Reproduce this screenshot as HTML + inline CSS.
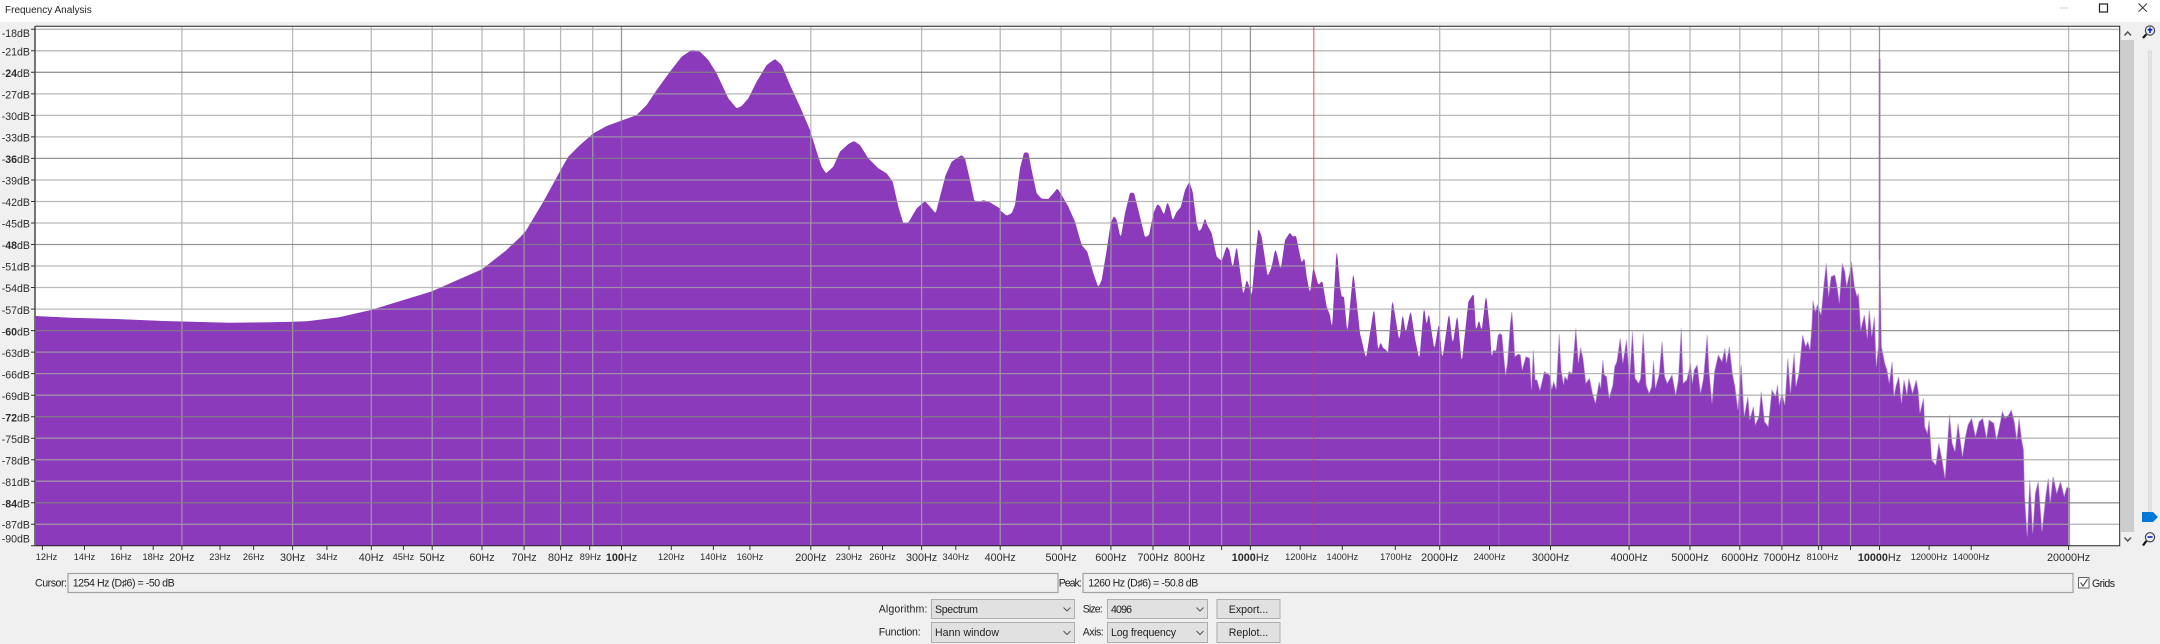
<!DOCTYPE html>
<html><head><meta charset="utf-8"><title>Frequency Analysis</title>
<style>
html,body{margin:0;padding:0;background:#f0f0f0;width:2160px;height:644px;overflow:hidden}
svg{display:block}
text{font-family:"Liberation Sans",Arial,sans-serif;fill:#2b2b2b}
.d{font-size:10.6px;text-anchor:end}
.M{font-size:10.8px;text-anchor:middle}
.m{font-size:9.2px;text-anchor:middle}
.c{font-size:10.6px;fill:#222}
</style></head><body>
<svg width="2160" height="644" viewBox="0 0 2160 644" xmlns="http://www.w3.org/2000/svg">
<defs>
<filter id="sm" filterUnits="userSpaceOnUse" x="0" y="0" width="2160" height="644" color-interpolation-filters="sRGB">
<feGaussianBlur stdDeviation=".8"/>
<feComponentTransfer><feFuncA type="linear" slope="4" intercept="-1.5"/></feComponentTransfer>
</filter>
<clipPath id="pc"><rect x="35" y="26" width="2085" height="520"/></clipPath>
</defs>
<rect width="2160" height="644" fill="#f0f0f0"/>
<rect width="2160" height="22" fill="#fff"/>
<text x="5" y="13" class="c" style="font-size:10px;fill:#222">Frequency Analysis</text>
<path d="M2060 8H2068" stroke="#ccc" stroke-width="1"/>
<rect x="2099.5" y="4" width="8" height="8" fill="none" stroke="#222" stroke-width="1.2"/>
<path d="M2138.5 3.5L2147 11.8M2147 3.5L2138.5 11.8" stroke="#333" stroke-width="1" fill="none"/>

<!-- plot -->
<rect x="35" y="26" width="2085" height="520" fill="#fff"/>

<!-- spectrum -->
<g clip-path="url(#pc)">
<g fill="#8a3abb" filter="url(#sm)">
<path d="M30 570V316L35.7 316 71 317.7 116 319 164 321 229 322.7 271 322.3 307 321.3 339 317.3 371 310 432 291.3 482 269.3 514 244.3 525 231.7V570Z"/>
<path transform="translate(500 30) scale(.33333)" d="M0 1620V680L30 650 73 610 100 565 130 515 182 420 205 380 240 345 280 310 320 288 364 272 410 255 440 225 470 180 510 125 545 80 575 60 600 65 625 90 650 130 685 205 710 235 725 228 745 205 770 155 800 105 825 87 845 105 870 165 900 230 930 300 950 365 965 410 978 430 1000 410 1020 365 1045 342 1062 333 1080 345 1105 385 1135 415 1160 430 1178 455 1195 530 1210 580 1225 578 1250 535 1275 513 1290 530 1307 550 1320 500 1337 435 1355 395 1385 375 1395 385 1410 450 1423 512 1440 515 1450 510 1470 517 1500 535V1620Z"/>
<path transform="translate(1000 130) scale(.33333)" d="M-3 1320V238L0 240 20 257 35 250 45 225 60 115 72 68 85 68 95 120 110 190 125 206 145 207 160 190 172 175 185 195 205 230 225 275 245 345 262 365 280 430 295 472 305 450 320 360 332 280 342 257 350 270 362 325 375 250 390 188 402 188 415 240 435 322 447 315 460 250 472 222 480 228 492 255 502 215 510 235 518 272 530 245 542 232 555 180 568 155 578 185 590 280 597 305 605 295 615 263 622 285 635 310 650 380 665 393 680 348 688 360 698 415 710 345 720 420 730 497 740 447 748 470 755 500 765 390 775 293 785 320 803 440 815 410 826 355 833 380 842 420 855 330 870 307 878 320 888 317 905 400 913 382 920 440 930 492 940 410 955 465 967 452 980 530 990 555 996 600 1010 348 1020 470 1025 500 1032 500 1042 612 1060 422 1080 610 1098 686 1122 532 1135 665 1141 635 1150 655 1160 660 1163 680 1177 505 1198 635 1208 548 1217 610 1232 540 1245 625 1258 690 1272 525 1280 590 1286 545 1303 660 1317 575 1327 690 1347 545 1358 645 1372 550 1385 702 1405 515 1421 490 1428 605 1437 568 1445 605 1458 490 1470 600 1475 690 1480 658 1488 665 1495 605 1500 625V1320Z"/>
</g>
<path fill="#8a3abb" stroke="#b08fd0" stroke-opacity=".5" stroke-width="1" vector-effect="non-scaling-stroke" transform="translate(1500 230) scale(.36996 .33333)" d="M-3 1000V315L0 310 5 315 15 435 20 400 28 280 32 245 36 300 40 380 50 372 55 375 60 420 70 380 80 385 85 480 90 360 95 450 100 450 108 482 120 425 135 437 140 478 145 455 152 478 160 312 165 420 172 465 175 440 182 450 186 425 195 430 205 295 212 400 218 352 225 390 232 460 242 445 250 490 258 520 268 455 272 475 278 390 282 435 288 440 295 505 305 465 310 410 316 395 325 325 332 400 342 330 350 450 358 305 365 445 375 460 380 445 387 310 395 465 403 490 410 470 415 390 420 475 430 435 438 335 445 440 452 460 465 435 475 495 482 450 490 295 495 460 505 450 515 400 520 460 525 420 533 405 542 490 550 445 560 315 565 425 573 520 580 425 590 375 600 395 608 355 612 400 620 350 628 430 635 470 643 540 652 405 660 560 670 500 675 570 685 530 690 585 700 560 706 485 715 575 725 590 735 480 745 500 750 465 755 525 762 490 770 525 778 385 785 490 795 370 800 470 808 430 818 315 826 350 832 335 838 360 843 285 846 212 852 245 858 225 868 255 875 170 882 100 888 200 895 140 905 135 912 175 917 220 925 100 932 125 937 170 945 130 950 95 958 170 965 200 969 190 975 300 985 255 993 325 998 240 1005 320 1012 260 1017 410 1023 350 1027 75 1031 350 1040 400 1046 420 1052 460 1060 395 1065 500 1070 470 1078 440 1085 520 1092 450 1100 495 1105 445 1115 490 1125 450 1130 480 1135 550 1145 505 1148 590 1155 610 1160 570 1167 690 1178 705 1186 640 1195 690 1203 745 1215 555 1222 640 1230 665 1238 580 1250 680 1258 620 1265 585 1275 565 1285 620 1295 575 1305 565 1315 625 1322 570 1335 580 1342 630 1350 590 1358 545 1365 565 1375 555 1382 540 1390 575 1397 630 1403 565 1410 630 1415 660 1418 800 1425 920 1432 750 1440 910 1447 790 1455 755 1465 905 1475 800 1482 745 1487 820 1495 740 1505 790 1515 755 1525 800 1532 772 1540 775V1000Z"/>
</g>
<path d="M1879.6 59V260" stroke="#a070c4" stroke-width="1.6"/>

<!-- grid -->
<path fill="none" stroke="#a7a7a7" stroke-opacity=".78" stroke-width="1.3" d="M35 29.3H2119M35 50.8H2119M35 93.9H2119M35 115.4H2119M35 136.9H2119M35 180H2119M35 201.5H2119M35 223H2119M35 266H2119M35 287.5H2119M35 309.1H2119M35 352.1H2119M35 373.6H2119M35 395.2H2119M35 438.2H2119M35 459.7H2119M35 481.2H2119M35 524.3H2119
M181.9 27V546M292.6 27V546M371.3 27V546M432.2 27V546M482 27V546M524.1 27V546M560.6 27V546M592.7 27V546M810.8 27V546M921.6 27V546M1000.2 27V546M1061.1 27V546M1110.9 27V546M1153 27V546M1189.5 27V546M1221.6 27V546M1439.7 27V546M1550.5 27V546M1629.1 27V546M1690 27V546M1739.8 27V546M1781.9 27V546M1818.6 27V546M1850.5 27V546M2068.6 27V546"/>
<path fill="none" stroke="#808080" stroke-opacity=".82" stroke-width="1.3" d="M35 72.3H2119M35 158.4H2119M35 244.5H2119M35 330.6H2119M35 416.7H2119M35 502.8H2119M621.5 27V546M1250.4 27V546M1879.5 27V546"/>
<path d="M1313.7 27V546" stroke="#e8303a" stroke-opacity=".6" stroke-width="1.4"/>

<!-- plot frame -->
<path fill="none" stroke="#222" stroke-width="1" d="M35 26.3H2119.7V545.7H35"/>
<path d="M35 26V546" stroke="#666" stroke-width="1.8"/>
<path fill="none" stroke="#333" stroke-width="1" d="M31 29.3H35M31 50.8H35M31 72.3H35M31 93.9H35M31 115.4H35M31 136.9H35M31 158.4H35M31 180H35M31 201.5H35M31 223H35M31 244.5H35M31 266H35M31 287.5H35M31 309.1H35M31 330.6H35M31 352.1H35M31 373.6H35M31 395.2H35M31 416.7H35M31 438.2H35M31 459.7H35M31 481.2H35M31 502.8H35M31 524.3H35M31 545.8H35
M42.4 546V550M84.5 546V550M121 546V550M153.2 546V550M181.9 546V550M220 546V550M253.6 546V550M292.6 546V550M326.9 546V550M371.3 546V550M403.4 546V550M432.2 546V550M482 546V550M524.1 546V550M560.6 546V550M589.7 546V550M621.5 546V550M671.3 546V550M713.4 546V550M749.9 546V550M810.8 546V550M849 546V550M882.5 546V550M921.6 546V550M955.8 546V550M1000.2 546V550M1061.1 546V550M1110.9 546V550M1153 546V550M1189.5 546V550M1221.6 546V550M1250.4 546V550M1300.2 546V550M1342.3 546V550M1395.3 546V550M1439.7 546V550M1489.5 546V550M1550.5 546V550M1629.1 546V550M1690 546V550M1739.8 546V550M1781.9 546V550M1818.6 546V550M1821.7 546V550M1850.5 546V550M1879.5 546V550M1929.1 546V550M1971.2 546V550M2068.6 546V550"/>

<!-- dB labels -->
<g>
<text class="d" x="30" y="37">-18dB</text>
<text class="d" x="30" y="55.5">-21dB</text>
<text class="d" x="30" y="77">-<tspan font-weight="bold">24</tspan>dB</text>
<text class="d" x="30" y="98.5">-27dB</text>
<text class="d" x="30" y="120">-30dB</text>
<text class="d" x="30" y="141.5">-33dB</text>
<text class="d" x="30" y="163">-<tspan font-weight="bold">36</tspan>dB</text>
<text class="d" x="30" y="184.7">-39dB</text>
<text class="d" x="30" y="206.2">-42dB</text>
<text class="d" x="30" y="227.7">-45dB</text>
<text class="d" x="30" y="249">-<tspan font-weight="bold">48</tspan>dB</text>
<text class="d" x="30" y="270.7">-51dB</text>
<text class="d" x="30" y="292.2">-54dB</text>
<text class="d" x="30" y="313.8">-57dB</text>
<text class="d" x="30" y="335.3">-<tspan font-weight="bold">60</tspan>dB</text>
<text class="d" x="30" y="356.8">-63dB</text>
<text class="d" x="30" y="378.3">-66dB</text>
<text class="d" x="30" y="399.9">-69dB</text>
<text class="d" x="30" y="421.4">-<tspan font-weight="bold">72</tspan>dB</text>
<text class="d" x="30" y="442.9">-75dB</text>
<text class="d" x="30" y="464.4">-78dB</text>
<text class="d" x="30" y="485.9">-81dB</text>
<text class="d" x="30" y="507.5">-<tspan font-weight="bold">84</tspan>dB</text>
<text class="d" x="30" y="528.5">-87dB</text>
<text class="d" x="30" y="542.5">-90dB</text>
</g>

<!-- Hz labels -->
<g>
<text class="m" x="46.5" y="560">12Hz</text><text class="m" x="84.5" y="560">14Hz</text><text class="m" x="121" y="560">16Hz</text><text class="m" x="153.2" y="560">18Hz</text>
<text class="M" x="181.9" y="561">20Hz</text><text class="m" x="220" y="560">23Hz</text><text class="m" x="253.6" y="560">26Hz</text><text class="M" x="292.6" y="561">30Hz</text>
<text class="m" x="326.9" y="560">34Hz</text><text class="M" x="371.3" y="561">40Hz</text><text class="m" x="403.4" y="560">45Hz</text><text class="M" x="432.2" y="561">50Hz</text>
<text class="M" x="482" y="561">60Hz</text><text class="M" x="524.1" y="561">70Hz</text><text class="M" x="560.6" y="561">80Hz</text><text class="m" x="590.5" y="560">89Hz</text>
<text class="M" x="621.5" y="561"><tspan font-weight="bold">100</tspan>Hz</text>
<text class="m" x="671.3" y="560">120Hz</text><text class="m" x="713.4" y="560">140Hz</text><text class="m" x="749.9" y="560">160Hz</text><text class="M" x="810.8" y="561">200Hz</text>
<text class="m" x="849" y="560">230Hz</text><text class="m" x="882.5" y="560">260Hz</text><text class="M" x="921.6" y="561">300Hz</text><text class="m" x="955.8" y="560">340Hz</text>
<text class="M" x="1000.2" y="561">400Hz</text><text class="M" x="1061.1" y="561">500Hz</text><text class="M" x="1110.9" y="561">600Hz</text><text class="M" x="1153" y="561">700Hz</text><text class="M" x="1189.5" y="561">800Hz</text>
<text class="M" x="1250.4" y="561"><tspan font-weight="bold">1000</tspan>Hz</text>
<text class="m" x="1301" y="560">1200Hz</text><text class="m" x="1342.3" y="560">1400Hz</text><text class="m" x="1396" y="560">1700Hz</text><text class="M" x="1439.7" y="561">2000Hz</text>
<text class="m" x="1489.5" y="560">2400Hz</text><text class="M" x="1550.5" y="561">3000Hz</text><text class="M" x="1629.1" y="561">4000Hz</text><text class="M" x="1690" y="561">5000Hz</text>
<text class="M" x="1739.8" y="561">6000Hz</text><text class="M" x="1781.9" y="561">7000Hz</text><text class="m" x="1822.5" y="560">8100Hz</text>
<text class="M" x="1879.5" y="561"><tspan font-weight="bold">10000</tspan>Hz</text>
<text class="m" x="1929.1" y="560">12000Hz</text><text class="m" x="1971.2" y="560">14000Hz</text><text class="M" x="2068.6" y="561">20000Hz</text>
</g>

<!-- scrollbar -->
<rect x="2121" y="40" width="13" height="492" fill="#cdcdcd"/>
<path d="M2124.5 35.5L2127.7 32 2131 35.5" fill="none" stroke="#555" stroke-width="1.5"/>
<path d="M2124.5 537.5L2127.7 541 2131 537.5" fill="none" stroke="#555" stroke-width="1.5"/>

<!-- slider -->
<rect x="2148.3" y="51" width="3" height="462" fill="#e4e4e4" stroke="#d4d4d4" stroke-width=".7"/>
<path d="M2142 512H2153L2158 517 2153 522H2142Z" fill="#0078d7"/>
<!-- zoom icons -->
<circle cx="2150" cy="30.5" r="4.6" fill="#e8eef8" stroke="#444" stroke-width="1.2"/>
<path d="M2147.7 29.8H2152.3M2150 27.5V33" stroke="#1020c8" stroke-width="1.6"/>
<path d="M2146.3 34.3L2143 38" stroke="#111" stroke-width="2.2"/>
<circle cx="2150" cy="537.3" r="4.6" fill="#e8eef8" stroke="#444" stroke-width="1.2"/>
<path d="M2147.5 537H2152.5" stroke="#1020c8" stroke-width="1.6"/>
<path d="M2146.3 541L2143 545.5" stroke="#111" stroke-width="2.2"/>

<!-- cursor / peak -->
<text x="35" y="586.5" class="c" textLength="32">Cursor:</text>
<rect x="68" y="573.5" width="990" height="19" fill="#f0f0f0" stroke="#a2a2a2" stroke-width="1.2"/>
<text x="72.7" y="586.5" class="c" textLength="102">1254 Hz (D♯6) = -50 dB</text>
<text x="1058.7" y="586.5" class="c" textLength="23">Peak:</text>
<rect x="1083" y="573.5" width="990" height="19" fill="#f0f0f0" stroke="#a2a2a2" stroke-width="1.2"/>
<text x="1088.3" y="586.5" class="c" textLength="110">1260 Hz (D♯6) = -50.8 dB</text>
<rect x="2078.5" y="577.5" width="10.5" height="10.5" fill="#fafafa" stroke="#666" stroke-width="1"/>
<path d="M2080.5 582.5L2083 586 2087.5 579" fill="none" stroke="#333" stroke-width="1"/>
<text x="2092" y="587" class="c" textLength="23">Grids</text>

<!-- dropdowns -->
<g fill="#e1e1e1" stroke="#adadad" stroke-width="1">
<rect x="931.5" y="599.5" width="143" height="19"/>
<rect x="931.5" y="622.5" width="143" height="20"/>
<rect x="1107.5" y="599.5" width="100" height="19"/>
<rect x="1107.5" y="622.5" width="100" height="20"/>
<rect x="1217" y="599.5" width="63" height="19"/>
<rect x="1217" y="622.5" width="63" height="20"/>
</g>
<path fill="none" stroke="#555" stroke-width="1" d="M1063.5 607.5L1067 611 1070.5 607.5M1063.5 631L1067 634.5 1070.5 631M1196.5 607.5L1200 611 1203.5 607.5M1196.5 631L1200 634.5 1203.5 631"/>
<text x="878.7" y="612.5" class="c" textLength="48.7">Algorithm:</text>
<text x="878.7" y="635.5" class="c" textLength="42">Function:</text>
<text x="1082.7" y="612.5" class="c" textLength="20">Size:</text>
<text x="1082.7" y="635.5" class="c" textLength="21">Axis:</text>
<text x="935" y="613" class="c" textLength="43">Spectrum</text>
<text x="935" y="636" class="c" textLength="64">Hann window</text>
<text x="1111" y="613" class="c" textLength="21">4096</text>
<text x="1111" y="636" class="c" textLength="65">Log frequency</text>
<text x="1248.5" y="613" class="c" text-anchor="middle">Export...</text>
<text x="1248.5" y="636" class="c" text-anchor="middle">Replot...</text>
</svg>
</body></html>
